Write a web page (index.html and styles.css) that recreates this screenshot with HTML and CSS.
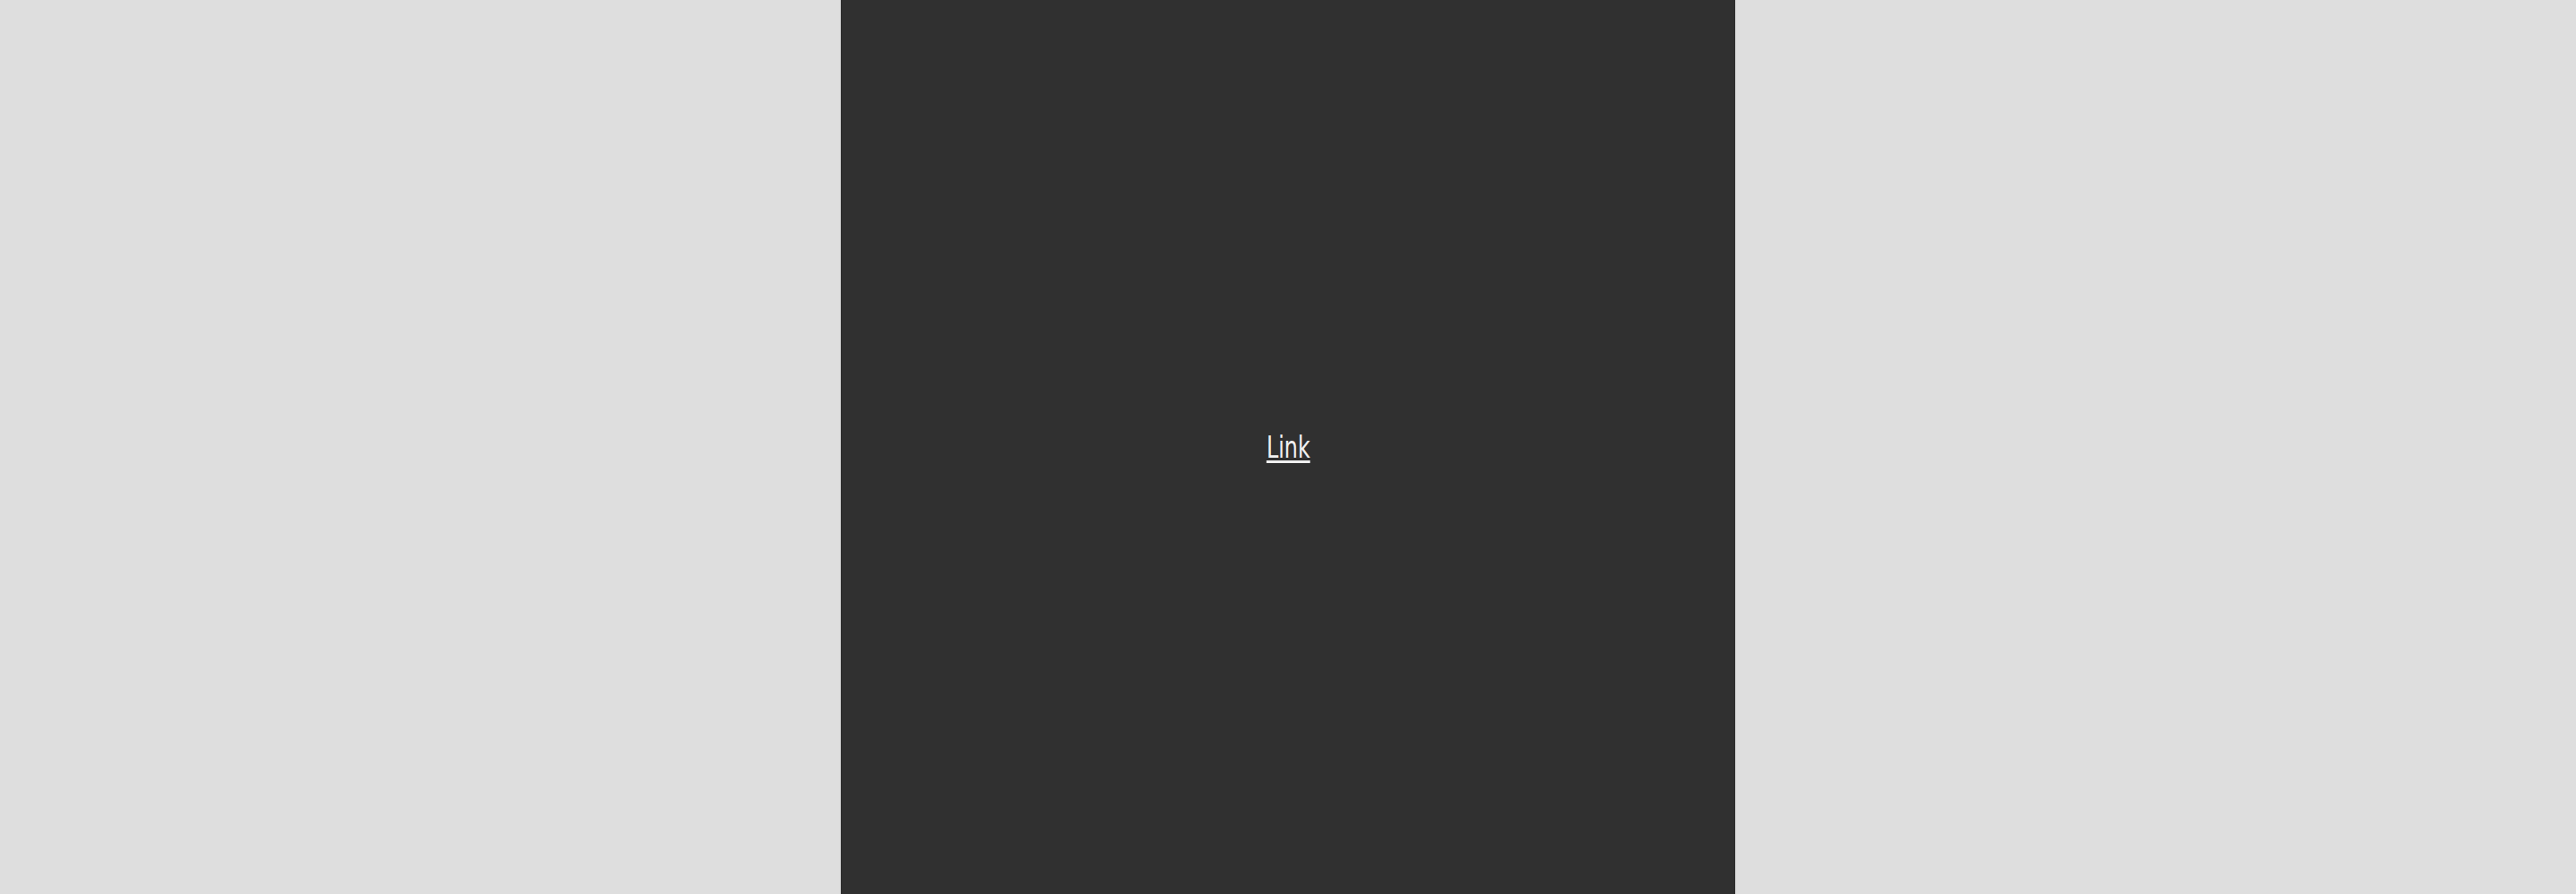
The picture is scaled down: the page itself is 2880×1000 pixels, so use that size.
FILE: index.html
```html
<!DOCTYPE html>
<html>
<head>
<meta charset="utf-8">
<link rel="stylesheet" href="styles.css">
</head>
<body>
<main class="panel">
  <a class="link" href="#">Link</a>
</main>
</body>
</html>
```
FILE: styles.css
```css
html, body {
  margin: 0;
  height: 100%;
  overflow: hidden;
}
body {
  background: #dedede;
  display: flex;
  justify-content: center;
}
.panel {
  width: 1000px;
  height: 1000px;
  background: #303030;
  display: flex;
  align-items: center;
  justify-content: center;
}
.link {
  display: inline-block;
  font-family: "DejaVu Sans", sans-serif;
  font-stretch: condensed;
  font-size: 34px;
  color: #f0f0f0;
  text-decoration: underline;
  text-underline-offset: 3px;
  text-decoration-thickness: 3px;
  line-height: 1;
  transform: scaleX(0.78);
}
```
